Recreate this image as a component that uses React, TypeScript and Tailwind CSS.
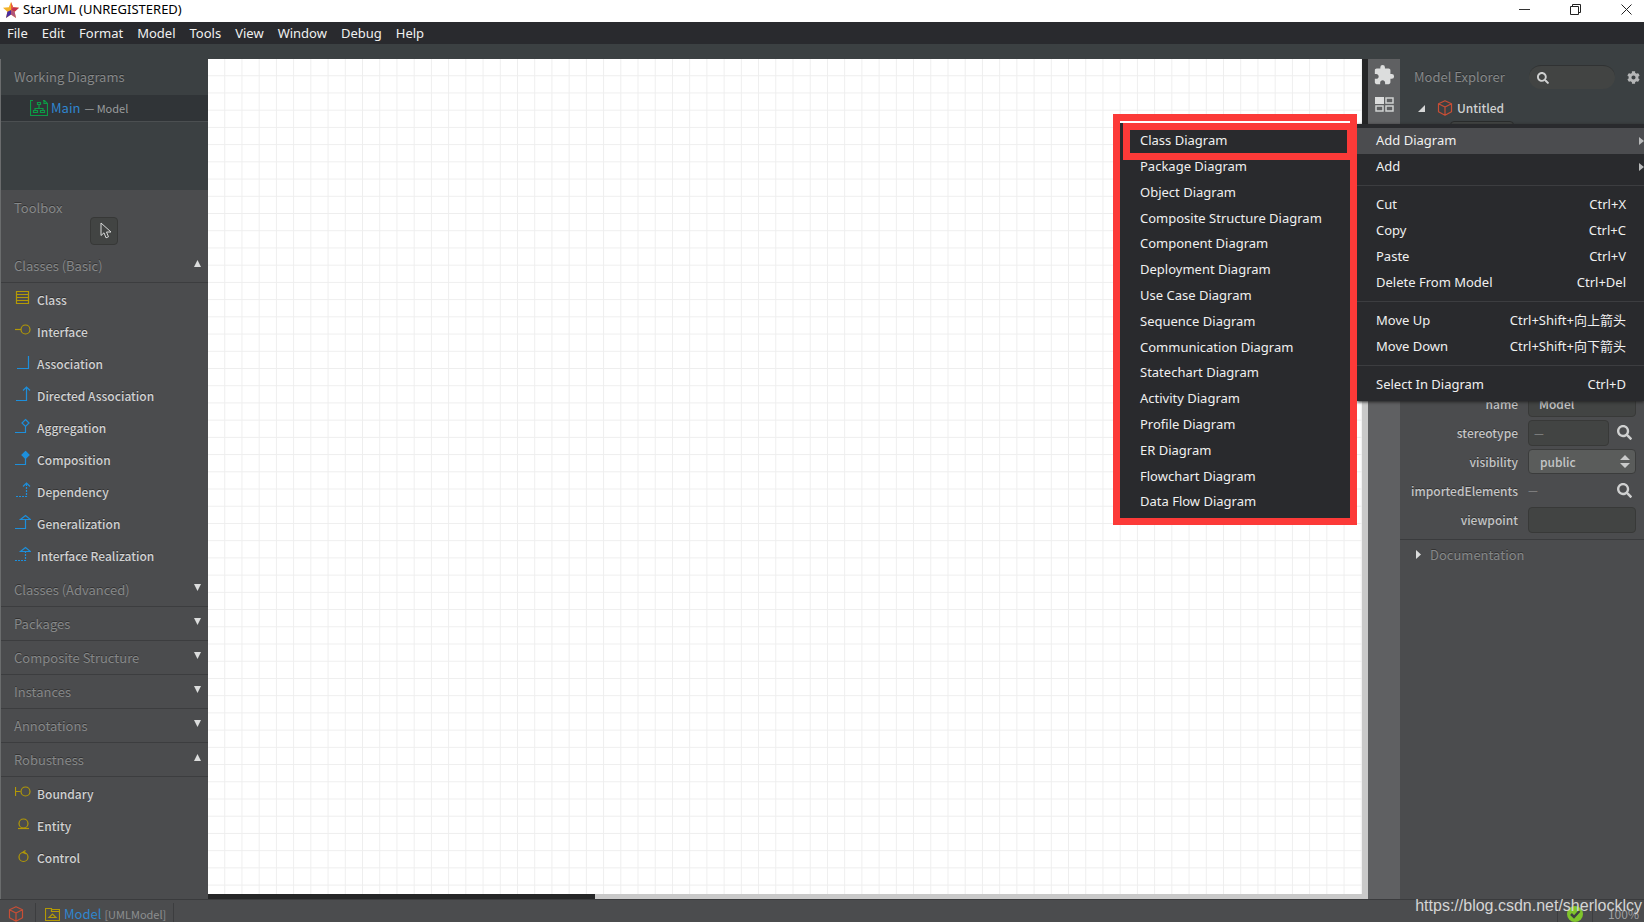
import type { ReactNode } from "react";
import { FaCog, FaSearch } from "react-icons/fa";
import { MdExtension } from "react-icons/md";

const menus = ["File", "Edit", "Format", "Model", "Tools", "View", "Window", "Debug", "Help"];

const diagrams = [
	"Class Diagram",
	"Package Diagram",
	"Object Diagram",
	"Composite Structure Diagram",
	"Component Diagram",
	"Deployment Diagram",
	"Use Case Diagram",
	"Sequence Diagram",
	"Communication Diagram",
	"Statechart Diagram",
	"Activity Diagram",
	"Profile Diagram",
	"ER Diagram",
	"Flowchart Diagram",
	"Data Flow Diagram",
];

const contextGroups = [
	[
		{ label: "Add Diagram", submenu: true, active: true },
		{ label: "Add", submenu: true },
	],
	[
		{ label: "Cut", keys: "Ctrl+X" },
		{ label: "Copy", keys: "Ctrl+C" },
		{ label: "Paste", keys: "Ctrl+V" },
		{ label: "Delete From Model", keys: "Ctrl+Del" },
	],
	[
		{ label: "Move Up", keys: "Ctrl+Shift+向上箭头" },
		{ label: "Move Down", keys: "Ctrl+Shift+向下箭头" },
	],
	[{ label: "Select In Diagram", keys: "Ctrl+D" }],
] as { label: string; keys?: string; submenu?: boolean; active?: boolean }[][];

// 16x16 toolbox glyphs, yellow for nodes and blue for edges
const glyphs: Record<string, ReactNode> = {
	Class: <path d="M1.500 1.500h12v12h-12zM1.500 4.500h12M1.500 7.500h12M1.500 10.500h12" />,
	Interface: (
		<>
			<path d="M0 7.500h6" />
			<circle cx="10.500" cy="7.500" r="4.500" />
		</>
	),
	Association: <path d="M2 14.500h11.500V2" />,
	"Directed Association": <path d="M1 14.500h10.500V1M8 4.500L11.500 1 15 4.500" />,
	Aggregation: <path d="M0 14.500h10.500V8M10.500 1.500L14 5l-3.500 3.500L7 5z" />,
	Composition: (
		<>
			<path d="M0 14.500h10.500V8" />
			<path d="M10.500 1.500L14 5l-3.500 3.500L7 5z" fill="currentColor" />
		</>
	),
	Dependency: (
		<>
			<path d="M1 14.500h10.500V1" strokeDasharray="2 1" />
			<path d="M8 4.500L11.500 1 15 4.500" />
		</>
	),
	Generalization: <path d="M0 14.500h10.500V6M5.500 5.500h10L10.500 1.500z" />,
	"Interface Realization": (
		<>
			<path d="M0 14.500h10.500V6" strokeDasharray="2 1" />
			<path d="M5.500 5.500h10L10.500 1.500z" />
		</>
	),
	Boundary: (
		<>
			<path d="M.5 3v9M.5 7.500h5" />
			<circle cx="10.500" cy="7.500" r="4.500" />
		</>
	),
	Entity: (
		<>
			<circle cx="8.500" cy="7.500" r="4.500" />
			<path d="M3 12.500h11" />
		</>
	),
	Control: (
		<>
			<circle cx="8.500" cy="9" r="4.500" />
			<path d="M7.500 4.500l3-2M8 4.500l3.500 1.500" />
		</>
	),
};

const basicTools = [
	"Class",
	"Interface",
	"Association",
	"Directed Association",
	"Aggregation",
	"Composition",
	"Dependency",
	"Generalization",
	"Interface Realization",
];
const nodeTools = ["Class", "Interface", "Boundary", "Entity", "Control"];

function Cube({ className }: { className: string }) {
	return (
		<svg
			viewBox="0 0 16 16"
			className={className}
			fill="none"
			stroke="#c94e35"
			strokeWidth="1.200"
			strokeLinejoin="round"
		>
			<path d="M8 .8l6.500 3v8L8 15.200l-6.500-3.400v-8zM1.500 3.800L8 7l6.500-3.200M8 7v8.200" />
		</svg>
	);
}

function Tools({ names }: { names: string[] }) {
	return (
		<ul className="py-px">
			{names.map((name) => (
				<li key={name}>
					<button className="flex h-8 w-full items-center pl-[14px] text-left text-xs text-[#d0d1d2]">
						<svg
							viewBox="0 0 16 16"
							className={
								nodeTools.includes(name)
									? "mb-1 h-4 w-4 text-[#b39906]"
									: "mb-1 h-4 w-4 text-[#1d8fdb]"
							}
							fill="none"
							stroke="currentColor"
							strokeWidth="1.200"
						>
							{glyphs[name]}
						</svg>
						<span className="pl-[6px] font-medium text-shadow-[0_-1px_0_#333]">{name}</span>
					</button>
				</li>
			))}
		</ul>
	);
}

function Category({ name, open }: { name: string; open?: boolean }) {
	return (
		<button className="flex h-[34px] w-full items-center justify-between border-b border-[#3c3d3f] pl-[13px] pr-[7px] text-left text-[#868889] text-shadow-[0_-1px_0_#333]">
			{name}
			<svg viewBox="0 0 8 8" className="mb-1 h-[7px] w-[7px]" fill="#dcdddd">
				<path d={open ? "M4 0l4 8H0z" : "M0 0h8L4 8z"} />
			</svg>
		</button>
	);
}

function Sidebar() {
	return (
		<aside className="flex w-[208px] shrink-0 flex-col border-l border-[#6a6c6d]">
			<section className="flex h-[131px] flex-col bg-[#3b4042]">
				<h2 className="h-9 pl-[13px] leading-9 text-[#868889] text-shadow-[0_-1px_0_#2a2d2e]">Working Diagrams</h2>
				<button className="flex h-[27px] items-center border-b border-[#4b4f51] bg-[#303437] pl-[29px]">
					<svg viewBox="0 0 18 18" className="h-[18px] w-[18px]" fill="none" stroke="#0c9a45" strokeWidth="1.200">
						<path d="M3 1.500H.5v15h17V4.500M13 1.500h1.500l3 3H14V1.500M7.500 3.500h3v2h-3zM9 5.500v4M5 11.500v-2h8v2M3.500 11.500h4v2h-4zM10.500 11.500h4v2h-4z" />
					</svg>
					<span className="pl-[3px] text-[#2f86cf]">Main</span>
					<span className="pl-1 text-[11px] text-[#9a9c9d]">— Model</span>
				</button>
			</section>
			<section className="flex-1 bg-[#4b4c4e]">
				<h2 className="h-[27px] pl-[13px] leading-9 text-[#868889] text-shadow-[0_-1px_0_#333]">Toolbox</h2>
				<div className="flex h-8 justify-center">
					<button
						aria-label="Select"
						className="mr-px flex h-7 w-7 items-center justify-center rounded border border-[#373837] bg-[#424443]"
					>
						<svg viewBox="0 0 12 18" className="ml-[3px] h-[18px] w-3" fill="#424443" stroke="#d8d9d9">
							<path d="M1 1v12.500l3-2.700 2 5 2.500-1-2-4.800H11z" />
						</svg>
					</button>
				</div>
				<Category name="Classes (Basic)" open />
				<Tools names={basicTools} />
				<Category name="Classes (Advanced)" />
				<Category name="Packages" />
				<Category name="Composite Structure" />
				<Category name="Instances" />
				<Category name="Annotations" />
				<Category name="Robustness" open />
				<Tools names={["Boundary", "Entity", "Control"]} />
			</section>
		</aside>
	);
}

function Canvas() {
	return (
		<main className="flex min-w-0 flex-1 flex-col bg-white">
			<div className="flex min-h-0 flex-1">
				<svg className="h-full min-w-0 flex-1">
					<defs>
						<pattern id="grid" width="17.22" height="17.22" patternUnits="userSpaceOnUse">
							<path d="M17.220 0v17.220M0 17.220h17.220" stroke="#eeeeee" strokeWidth="2" fill="none" />
						</pattern>
					</defs>
					<rect width="100%" height="100%" fill="url(#grid)" />
				</svg>
				<div className="w-[6px] bg-[#c9c9c9]">
					<div className="h-1/3 bg-[#252627]" />
				</div>
			</div>
			<div className="h-[5px] bg-[#c9c9c9]">
				<div className="h-full w-1/3 bg-[#252627]" />
			</div>
		</main>
	);
}

function Property({ label, id, children }: { label: string; id: string; children: ReactNode }) {
	return (
		<div className="flex h-[29px] items-center pr-2">
			<label
				htmlFor={id}
				className="w-[118px] shrink-0 text-right font-medium text-[#c4c5c6] text-shadow-[0_-1px_0_#333]"
			>
				{label}
			</label>
			<div className="ml-[10px] flex flex-1 items-center justify-between">{children}</div>
		</div>
	);
}

function Inspector() {
	return (
		<aside className="flex w-[244px] shrink-0 flex-col bg-[#4b4c4e]">
			<section className="h-[300px] overflow-hidden bg-[#3b4042]">
				<div className="flex h-9 items-center pl-[14px] pr-1">
					<h2 className="flex-1 text-[#868889] text-shadow-[0_-1px_0_#2a2d2e]">Model Explorer</h2>
					<label className="mr-3 flex h-6 w-[86px] items-center rounded-full border-t border-[#303233] bg-[#424443] pl-2">
						<FaSearch size={12} color="#cfd0d0" />
						<input aria-label="Search" className="w-12 bg-transparent outline-none" />
					</label>
					<button aria-label="Settings">
						<FaCog size={13} color="#b5b6b7" />
					</button>
				</div>
				<div className="flex h-[26px] items-center pl-[18px] text-xs text-[#d0d1d1]">
					<svg viewBox="0 0 7 7" className="h-[7px] w-[7px]" fill="#d6d7d7">
						<path d="M7 0v7H0z" />
					</svg>
					<Cube className="ml-3 mr-1 h-4 w-4" />
					<span className="font-medium">Untitled</span>
				</div>
				<div className="ml-[50px] h-7 w-16 rounded border border-[#2a2c2c] bg-[#424443]" />
			</section>
			<section className="pt-[30px] text-xs">
				<Property label="name" id="name">
					<input
						id="name"
						defaultValue="Model"
						className="h-[26px] w-full rounded border border-[#383938] bg-[#424443] px-[10px] font-medium text-[#c4c5c6] outline-none"
					/>
				</Property>
				<Property label="stereotype" id="stereotype">
					<input
						id="stereotype"
						defaultValue="—"
						className="h-[26px] w-[81px] rounded border border-[#383938] bg-[#424443] px-[5px] text-[11px] text-[#888] outline-none"
					/>
					<button aria-label="Find stereotype" className="mr-1">
						<FaSearch size={15} color="#cfd0d0" />
					</button>
				</Property>
				<Property label="visibility" id="visibility">
					<div className="relative w-full">
						<select
							id="visibility"
							className="h-[25px] w-full appearance-none rounded border border-[#3b3c3c] bg-[#5a5c5b] px-[11px] font-medium text-[#c4c5c6] outline-none"
						>
							<option>public</option>
						</select>
						<svg
							viewBox="0 0 10 13"
							className="pointer-events-none absolute right-[6px] top-[6px] h-[13px] w-[10px]"
							fill="#c9caca"
						>
							<path d="M5 0l5 5H0zM0 8h10l-5 5z" />
						</svg>
					</div>
				</Property>
				<Property label="importedElements" id="imported">
					<span className="text-[11px] text-[#888]">—</span>
					<button id="imported" aria-label="Find imported elements" className="mr-1">
						<FaSearch size={15} color="#cfd0d0" />
					</button>
				</Property>
				<Property label="viewpoint" id="viewpoint">
					<input
						id="viewpoint"
						className="h-[26px] w-full rounded border border-[#383938] bg-[#424443] px-[10px] outline-none"
					/>
				</Property>
			</section>
			<button className="mt-[5px] flex h-[30px] items-center border-t border-[#3a3b3d] pl-4 text-[#868889] text-shadow-[0_-1px_0_#333]">
				<svg viewBox="0 0 5 9" className="mr-[9px] h-[9px] w-[5px]" fill="#dcdddd">
					<path d="M0 0l5 4.500L0 9z" />
				</svg>
				Documentation
			</button>
		</aside>
	);
}

function ContextMenu() {
	return (
		<div className="absolute right-0 top-[124px] w-[287px] bg-[#292a2d] pb-[3px] pt-1 font-['Noto_Sans','Noto_Sans_CJK_SC',sans-serif] text-[13px] text-[#f0f0f0] shadow-[0_1px_3px_#222]">
			{contextGroups.map((group, index) => (
				<ul key={index} className={index ? "mt-[5px] border-t border-[#3c3d40] pt-[6px]" : ""}>
					{group.map((item) => (
						<li key={item.label}>
							<button
								className={
									item.active
										? "flex h-[26px] w-full items-center justify-between bg-[#4b4c4f] pl-[19px]"
										: "flex h-[26px] w-full items-center justify-between pl-[19px]"
								}
							>
								{item.label}
								{item.submenu ? (
									<svg viewBox="0 0 5 8" className="h-2 w-[5px]" fill="#b9babb">
										<path d="M0 0l5 4-5 4z" />
									</svg>
								) : (
									<span className="pr-[18px]">{item.keys}</span>
								)}
							</button>
						</li>
					))}
				</ul>
			))}
		</div>
	);
}

function DiagramMenu() {
	return (
		<div className="absolute right-[287px] top-[114px] w-[244px] border-7 border-[#fc3a38] bg-[#292a2d] font-['Noto_Sans',sans-serif] text-[13px] text-[#f0f0f0]">
			<div className="h-[2px] bg-white" />
			<ul className="grid h-[395px] auto-rows-fr pb-[3px] pt-[5px]">
				{diagrams.map((name) => (
					<li key={name} className="flex">
						<button className="w-full pl-5 text-left">{name}</button>
					</li>
				))}
			</ul>
			<div className="pointer-events-none absolute -right-1 left-[3px] top-[2px] h-[37px] border-7 border-[#fc3a38]" />
		</div>
	);
}

export default function App() {
	return (
		<div className="relative flex h-screen flex-col overflow-hidden bg-[#3b4042] font-['Noto_Sans_CJK_SC',sans-serif] text-[13px]">
			<header className="flex h-[22px] items-center bg-white pb-[3px] pl-[3px] font-['Noto_Sans',sans-serif] text-black">
				<svg viewBox="0 0 16 16" className="h-4 w-4">
					<path d="M8 0l2.200 5.200 5.800.6-4.400 3.900L13 16 8 12.400 3 16l1.400-6.300L0 5.800l5.800-.6z" fill="#f3b229" />
					<path d="M8 0l2.200 5.200L8 8z" fill="#e5574a" />
					<path d="M10.200 5.200l5.800.6-4.400 3.900L8 8z" fill="#c42f4f" />
					<path d="M11.600 9.700L13 16 8 12.400V8z" fill="#b0547a" />
					<path d="M8 8v4.400L3 16l1.400-6.300z" fill="#4a2c9f" />
				</svg>
				<h1 className="flex-1 pl-1">StarUML (UNREGISTERED)</h1>
				<div className="flex gap-10 pr-3">
					<button aria-label="Minimize">
						<svg viewBox="0 0 11 11" className="h-[11px] w-[11px]" fill="none" stroke="#333">
							<path d="M0 5.500h11" />
						</svg>
					</button>
					<button aria-label="Restore">
						<svg viewBox="0 0 11 11" className="h-[11px] w-[11px]" fill="none" stroke="#222">
							<path d="M.5 2.500h8v8h-8zM2.500 2.500v-2h8v8h-2" />
						</svg>
					</button>
					<button aria-label="Close">
						<svg viewBox="0 0 11 11" className="h-[11px] w-[11px]" fill="none" stroke="#222">
							<path d="M.5.5l10 10M10.500.5l-10 10" />
						</svg>
					</button>
				</div>
			</header>
			<nav className="flex h-[22px] items-center gap-[14px] bg-[#292a2e] pl-[7px] pt-px font-['Noto_Sans',sans-serif] text-[#f0f0f0]">
				{menus.map((name) => (
					<button key={name}>{name}</button>
				))}
			</nav>
			<div className="mt-[15px] flex min-h-0 flex-1">
				<Sidebar />
				<Canvas />
				<div className="flex w-8 shrink-0 flex-col items-center gap-[11px] bg-[#5f6062] pt-[5px]">
					<button aria-label="Extensions">
						<MdExtension size={22} color="#dcdddd" />
					</button>
					<button aria-label="Layout">
						<svg viewBox="0 0 19 15" className="h-[15px] w-[19px]" fill="none" stroke="#d0d1d1" strokeWidth="1.500">
							<path d="M0 0h9v7H0z" fill="#dcdddd" stroke="none" />
							<path d="M11 1h7v5h-7zM1 9h7v5H1zM11 9h7v5h-7z" />
						</svg>
					</button>
				</div>
				<Inspector />
			</div>
			<footer className="flex h-[23px] items-center border-t border-[#3a3b3d] bg-[#4b4c4e] pt-[6px]">
				<div className="flex h-[23px] w-9 items-center border-r border-[#3c3d3f] pl-2">
					<Cube className="h-4 w-4" />
				</div>
				<div className="flex h-[23px] items-center border-r border-[#3c3d3f] pl-[9px] pr-[7px]">
					<svg viewBox="0 0 15 13" className="h-[13px] w-[15px]" fill="none" stroke="#b39906" strokeWidth="1.200">
						<path d="M.5.5h6v3h8v9H.5zM6.500 1.500h8v2M4 9.500h7L7.500 6z" />
					</svg>
					<span className="pl-1 text-[#2f86cf]">Model</span>
					<span className="pl-[3px] text-[11px] text-[#8d8f90]">[UMLModel]</span>
				</div>
				<div className="ml-auto flex h-[23px] items-center">
					<div className="flex h-full w-9 items-center justify-center border-x border-[#3c3d3f]">
						<svg viewBox="0 0 16 16" className="h-4 w-4">
							<circle cx="8" cy="8" r="8" fill="#7fc42c" />
							<path d="M4 8l3 3 5.500-6" fill="none" stroke="#3f4042" strokeWidth="2.500" />
						</svg>
					</div>
					<span className="w-[51px] pr-[5px] text-right text-xs text-[#9d9fa0]">100%</span>
				</div>
			</footer>
			<ContextMenu />
			<DiagramMenu />
			<p className="absolute bottom-1 right-[2px] font-['Liberation_Sans',sans-serif] text-base text-[#d5d5d5]">
				https://blog.csdn.net/sherlocklcy
			</p>
		</div>
	);
}
